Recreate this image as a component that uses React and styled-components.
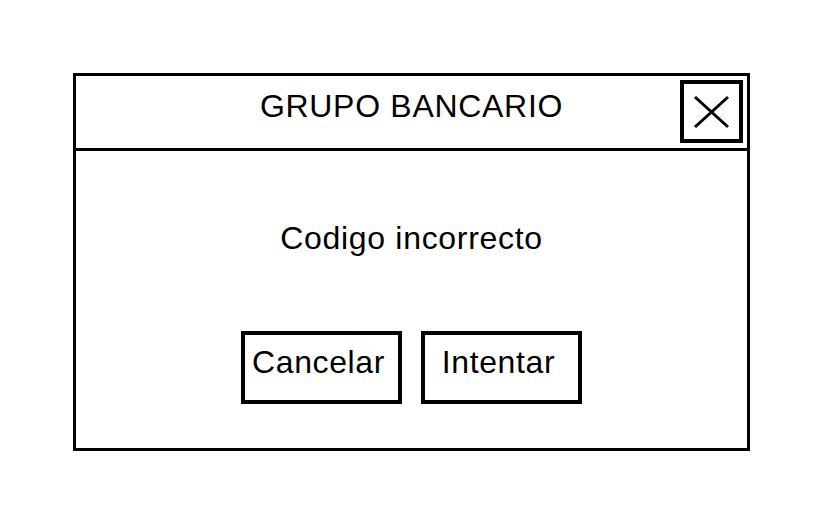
import React from "react";
import styled, { createGlobalStyle } from "styled-components";

const Global = createGlobalStyle`
  html, body { margin: 0; padding: 0; background: #fff; }
  body { font-family: "Liberation Sans", Arial, sans-serif; color: #000; }
`;

const Page = styled.div`
  padding: 73px 0 0 73px;
`;

const Dialog = styled.div`
  box-sizing: border-box;
  width: 677px;
  height: 378px;
  border: 3px solid #000;
  display: flex;
  flex-direction: column;
`;

const Header = styled.div`
  box-sizing: border-box;
  height: 75px;
  border-bottom: 3px solid #000;
  display: grid;
  grid-template-columns: 1fr auto 1fr;
  align-items: start;
`;

const Title = styled.div`
  grid-column: 2;
  padding-top: 14px;
  font-size: 32px;
  line-height: 32px;
  letter-spacing: 0.7px;
  white-space: nowrap;
`;

const CloseButton = styled.div`
  grid-column: 3;
  justify-self: end;
  box-sizing: border-box;
  width: 63px;
  height: 63px;
  margin: 4px 4px 0 0;
  border: 4px solid #000;
  display: flex;
  align-items: center;
  justify-content: center;
`;

const Body = styled.div`
  flex: 1;
  display: flex;
  flex-direction: column;
  align-items: center;
  padding-top: 71px;
`;

const Message = styled.div`
  font-size: 32px;
  line-height: 32px;
  letter-spacing: 0.7px;
  white-space: nowrap;
`;

const Actions = styled.div`
  display: flex;
  gap: 19px;
  margin-top: 77px;
`;

const Button = styled.div`
  box-sizing: border-box;
  width: 161px;
  height: 73px;
  border: 4px solid #000;
  padding-top: 11px;
  padding-right: ${(p) => p.$shift || 0}px;
  display: flex;
  justify-content: center;
  align-items: flex-start;
  font-size: 32px;
  line-height: 32px;
  letter-spacing: 0.6px;
  white-space: nowrap;
`;

export default function App() {
  return (
    <>
      <Global />
      <Page>
        <Dialog>
          <Header>
            <Title>GRUPO BANCARIO</Title>
            <CloseButton>
              <svg width="55" height="55" viewBox="0 0 55 55">
                <path
                  d="M11 13 L44 43 M44 13 L11 43"
                  stroke="#000"
                  strokeWidth="3"
                  fill="none"
                />
              </svg>
            </CloseButton>
          </Header>
          <Body>
            <Message>Codigo incorrecto</Message>
            <Actions>
              <Button $shift={6}>Cancelar</Button>
              <Button $shift={6}>Intentar</Button>
            </Actions>
          </Body>
        </Dialog>
      </Page>
    </>
  );
}
